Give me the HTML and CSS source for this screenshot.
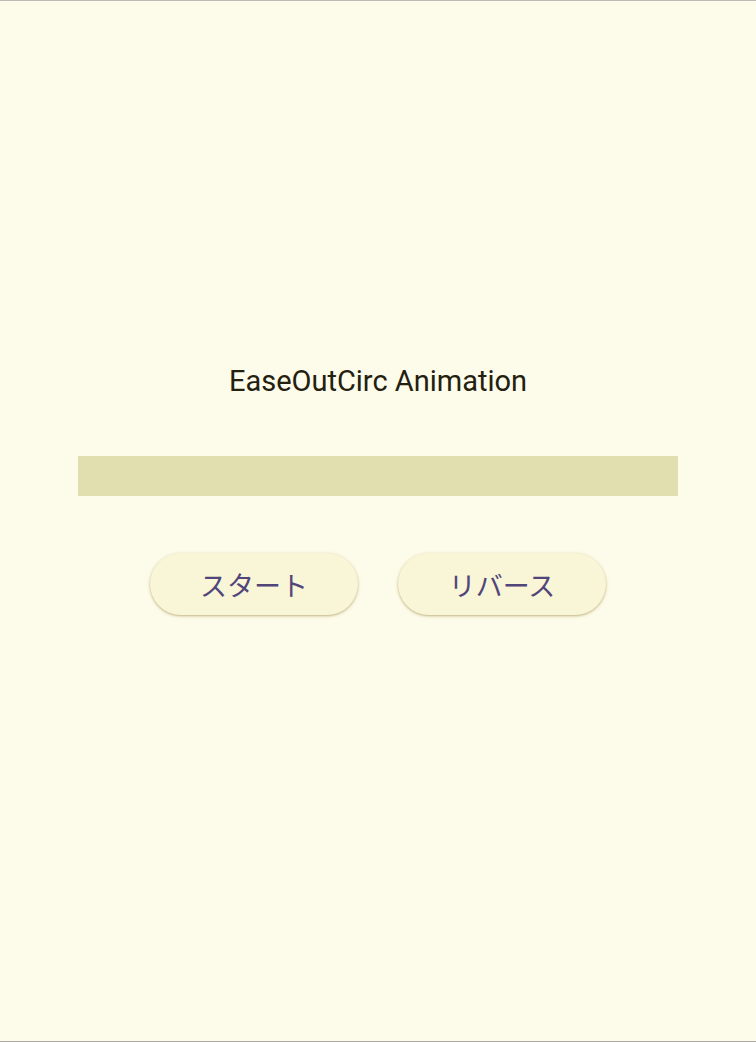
FILE: index.html
```html
<!DOCTYPE html>
<html lang="ja">
<head>
<meta charset="utf-8">
<link rel="stylesheet" href="styles.css">
</head>
<body>
<main class="screen">
  <h1 class="title">EaseOutCirc Animation</h1>
  <div class="bar"></div>
  <div class="actions">
    <button class="btn">スタート</button>
    <button class="btn">リバース</button>
  </div>
</main>
</body>
</html>
```
FILE: styles.css
```css
html, body {
  margin: 0;
  padding: 0;
  height: 100%;
}
body {
  box-sizing: border-box;
  background: #fdfbea;
  border-top: 1px solid #bdbab8;
  border-bottom: 1px solid #a9a7a4;
  font-family: Roboto, "Noto Sans CJK JP", sans-serif;
}
.screen {
  display: flex;
  flex-direction: column;
  align-items: center;
  padding-top: 362px;
}
.title {
  margin: 0;
  font-size: 29px;
  line-height: 36px;
  font-weight: 400;
  color: #23200f;
}
.bar {
  margin-top: 57px;
  width: 600px;
  height: 40px;
  background: #e1deaf;
}
.actions {
  margin-top: 57px;
  display: flex;
  gap: 40px;
}
.btn {
  width: 208px;
  height: 62px;
  border: none;
  border-radius: 31px;
  background: #f9f5d7;
  color: #51467a;
  font-family: "Noto Sans CJK JP", Roboto, sans-serif;
  font-size: 27px;
  box-shadow: 0 1px 2px rgba(120, 100, 20, 0.35), 0 1px 3px 1px rgba(160, 140, 40, 0.15);
  padding: 0;
}
```
